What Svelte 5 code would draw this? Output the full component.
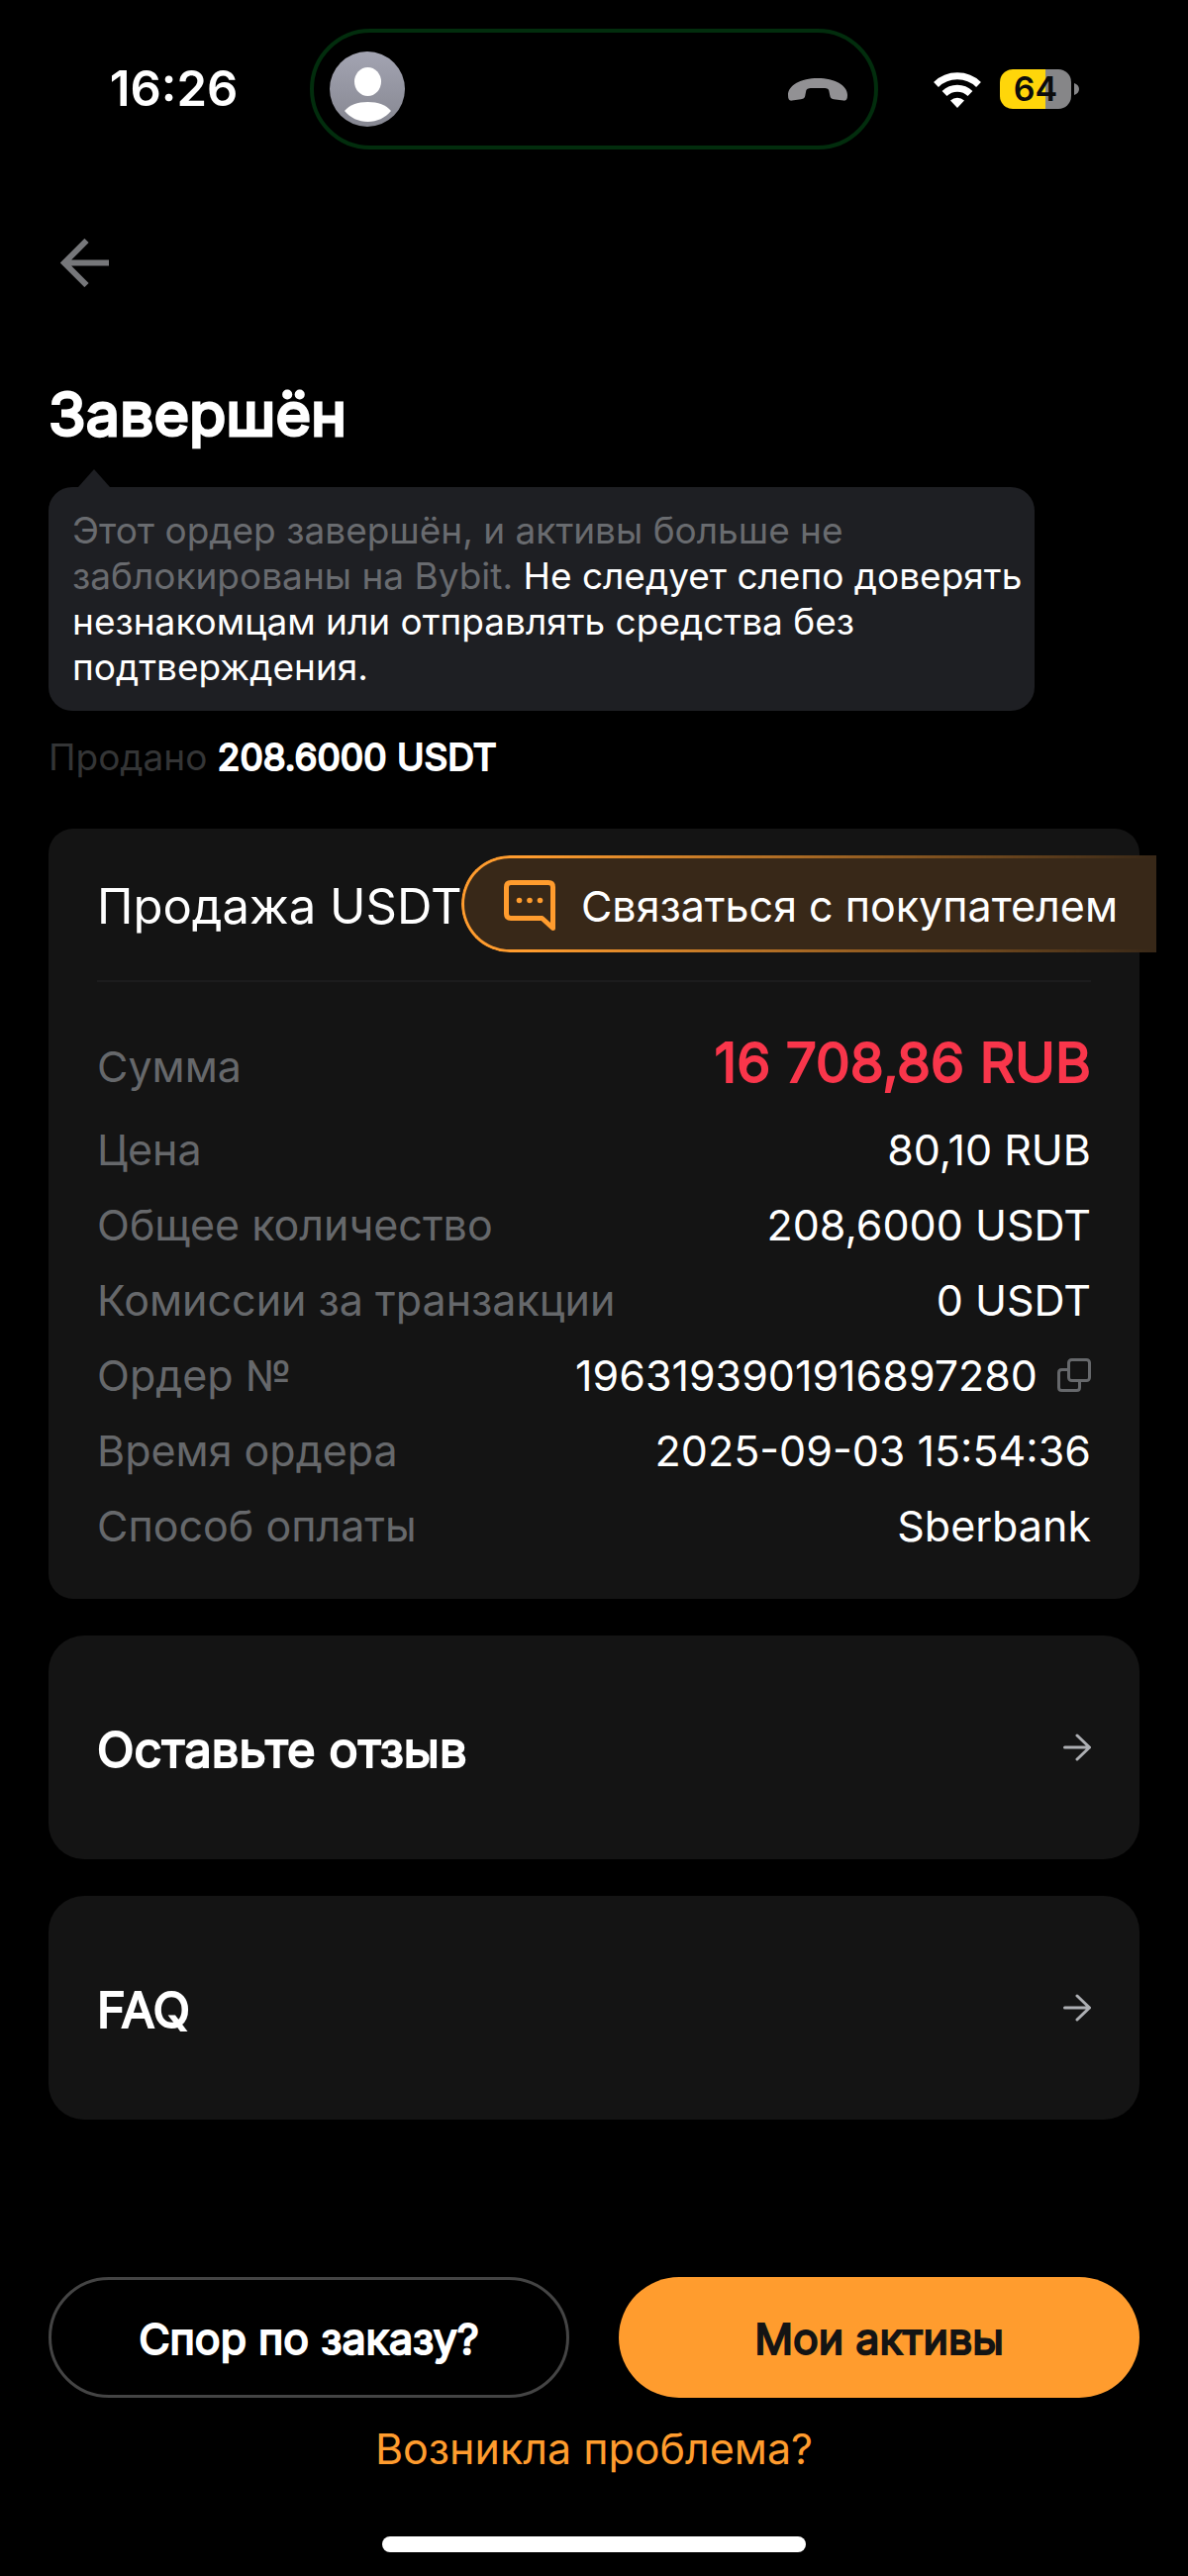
<script lang="ts">
	type Row = { label: string; value: string; copy?: boolean; total?: boolean };

	const rows: Row[] = [
		{ label: 'Сумма', value: '16 708,86 RUB', total: true },
		{ label: 'Цена', value: '80,10 RUB' },
		{ label: 'Общее количество', value: '208,6000 USDT' },
		{ label: 'Комиссии за транзакции', value: '0 USDT' },
		{ label: 'Ордер №', value: '1963193901916897280', copy: true },
		{ label: 'Время ордера', value: '2025-09-03 15:54:36' },
		{ label: 'Способ оплаты', value: 'Sberbank' }
	];

	const links = ['Оставьте отзыв', 'FAQ'];

	function copyValue(value: string) {
		navigator.clipboard?.writeText(value);
	}
</script>

<div class="screen">
	<div class="status">
		<span class="status__time">16:26</span>
		<div class="island">
			<svg class="island__avatar" viewBox="0 0 76 76" aria-hidden="true">
				<defs>
					<linearGradient id="avatar" x1="0" y1="0" x2="0" y2="1">
						<stop offset="0" stop-color="#a3a4b2" />
						<stop offset="1" stop-color="#868791" />
					</linearGradient>
				</defs>
				<circle cx="38" cy="38" r="38" fill="url(#avatar)" />
				<ellipse cx="38.500" cy="30.500" rx="13.500" ry="14.500" fill="#fff" />
				<path d="M15 60C20 54 28 51 38.500 51S57 54 62 60C56 67 48 71 38.500 71S21 67 15 60Z" fill="#fff" />
			</svg>
			<svg class="island__phone" viewBox="0 0 60 23" aria-hidden="true">
				<path
					d="M30 0C13 0 0 7 0 17C0 21 1 23 4 22.600L13 21.300C16 20.800 17 20 17.400 17L18.200 13C18.600 11 20 10 24 10H36C40 10 41 11 41.400 13L42.200 17C42.600 20 43.500 20.800 46 21.300L56 22.600C59 23 60 21 60 17C60 7 47 0 30 0Z"
					fill="#929194"
				/>
			</svg>
		</div>
		<div class="status__icons">
			<svg class="status__wifi" viewBox="0 0 48 37" aria-hidden="true">
				<g fill="none" stroke="#fff" stroke-width="7">
					<path d="M2.500 13.500A31 31 0 0 1 45.500 13.500" />
					<path d="M11 22.500A18.800 18.800 0 0 1 37 22.500" />
				</g>
				<path d="M17 29.500A10.500 10.500 0 0 1 31 29.500L24 37Z" fill="#fff" />
			</svg>
			<div class="battery">
				<span class="battery__level">64</span>
				<svg class="battery__tip" viewBox="0 0 5 12" aria-hidden="true">
					<path d="M0 0C3 1 5 3 5 6S3 11 0 12Z" fill="#868688" />
				</svg>
			</div>
		</div>
	</div>

	<nav class="nav">
		<button class="nav__back" aria-label="Назад">
			<svg viewBox="0 0 49 49" fill="none" stroke="#76777a" stroke-width="6" aria-hidden="true">
				<path d="M26.500 2L4 24.500L26.500 47M4 24.500H49" />
			</svg>
		</button>
	</nav>

	<main class="content">
		<h1 class="title">Завершён</h1>
		<p class="notice">
			Этот ордер завершён, и активы больше не заблокированы на Bybit.
			<strong class="notice__warn">Не следует слепо доверять незнакомцам или отправлять средства без подтверждения.</strong>
		</p>
		<p class="sold">Продано <strong class="sold__amount">208.6000 USDT</strong></p>

		<section class="order">
			<h2 class="order__title">Продажа USDT</h2>
			<button class="contact">
				<svg class="contact__icon" viewBox="0 0 52 52" aria-hidden="true">
					<path
						d="M7 2.500H45Q49.500 2.500 49.500 7V48.500L38.500 38.500H7Q2.500 38.500 2.500 34V7Q2.500 2.500 7 2.500Z"
						fill="none"
						stroke="#ff9c2e"
						stroke-width="5"
						stroke-linejoin="round"
					/>
					<g fill="#ff9c2e">
						<circle cx="15.500" cy="20.500" r="2.800" />
						<circle cx="26" cy="20.500" r="2.800" />
						<circle cx="36.500" cy="20.500" r="2.800" />
					</g>
				</svg>
				<span>Связаться с покупателем</span>
			</button>

			<dl class="details">
				{#each rows as row}
					<div class="details__row" class:details__row--total={row.total}>
						<dt>{row.label}</dt>
						<dd>
							{row.value}
							{#if row.copy}
								<button class="copy" aria-label="Копировать" onclick={() => copyValue(row.value)}>
									<svg viewBox="0 0 34 34" fill="none" stroke="#66686b" stroke-width="3" aria-hidden="true">
										<rect x="11.500" y="1.500" width="21" height="21" rx="3" />
										<path d="M11.500 11.500H4.500Q1.500 11.500 1.500 14.500V29.500Q1.500 32.500 4.500 32.500H19.500Q22.500 32.500 22.500 29.500V22.500" />
									</svg>
								</button>
							{/if}
						</dd>
					</div>
				{/each}
			</dl>
		</section>

		{#each links as link}
			<a class="link-card" href="#top">
				<span class="link-card__text">{link}</span>
				<svg viewBox="0 0 28 28" fill="none" stroke="#adafb3" stroke-width="3" stroke-linecap="round" stroke-linejoin="round" aria-hidden="true">
					<path d="M1.500 14H26.500M14 2L26.500 14L14 26" />
				</svg>
			</a>
		{/each}
	</main>

	<footer class="footer">
		<div class="footer__buttons">
			<button class="btn btn--outline">Спор по заказу?</button>
			<button class="btn btn--primary">Мои активы</button>
		</div>
		<a class="footer__help" href="#help">Возникла проблема?</a>
		<div class="home-bar"></div>
	</footer>
</div>

<style>
	:global(body) {
		margin: 0;
		background-color: #000;
	}

	.screen {
		display: flex;
		flex-direction: column;
		box-sizing: border-box;
		min-height: 100vh;
		padding-top: 29px;
		background-color: #000;
		color: #fff;
		font-family: Inter, 'Liberation Sans', sans-serif;
	}

	button {
		margin: 0;
		padding: 0;
		border: none;
		background: none;
		color: inherit;
		font: inherit;
		cursor: pointer;
	}

	a {
		color: inherit;
		text-decoration: none;
	}

	svg {
		display: block;
		flex-shrink: 0;
	}

	.status {
		display: grid;
		grid-template-columns: 1fr minmax(0, 574px) 1fr;
		align-items: center;
	}

	.status__time {
		padding-left: 38px;
		font-size: 49px;
		font-weight: 600;
		line-height: 60px;
		text-align: center;
	}

	.island {
		display: flex;
		justify-content: space-between;
		align-items: center;
		box-sizing: border-box;
		height: 122px;
		padding: 0 27px 0 16px;
		border: 4px solid #022d0d;
		border-radius: 61px;
	}

	.island__avatar {
		width: 76px;
		height: 76px;
	}

	.island__phone {
		width: 60px;
		height: 23px;
	}

	.status__icons {
		display: flex;
		align-items: center;
		gap: 19px;
		padding-left: 56px;
	}

	.status__wifi {
		width: 48px;
		height: 37px;
	}

	.battery {
		display: flex;
		align-items: center;
		gap: 3px;
	}

	.battery__level {
		width: 72px;
		height: 40px;
		border-radius: 13px;
		background: linear-gradient(to right, #ffd60a 64%, #868688 64%);
		color: #0c0c0c;
		font-size: 34px;
		font-weight: 600;
		line-height: 40px;
		text-align: center;
	}

	.battery__tip {
		width: 5px;
		height: 12px;
	}

	.nav {
		padding: 90px 61px;
	}

	.nav__back {
		display: block;
	}

	.nav__back svg {
		width: 49px;
		height: 49px;
	}

	.content {
		padding: 0 49px;
	}

	.title {
		margin: 0;
		font-size: 61px;
		font-weight: 400;
		line-height: 76px;
		-webkit-text-stroke: 3px;
	}

	.notice {
		position: relative;
		box-sizing: border-box;
		max-width: 996px;
		margin: 36px 0 24px;
		padding: 21px 12px 21px 24px;
		border-radius: 24px;
		background-color: #1e1f23;
		color: #696b6f;
		font-size: 37px;
		line-height: 46px;
	}

	.notice::before {
		content: '';
		position: absolute;
		top: -18px;
		left: 30px;
		border: 16px solid transparent;
		border-top: none;
		border-bottom: 18px solid #1e1f23;
	}

	.notice__warn {
		color: #fff;
		font-weight: 400;
	}

	.sold {
		margin: 0 0 49px;
		color: #343536;
		font-size: 37px;
		line-height: 46px;
	}

	.sold__amount {
		color: #fff;
		font-weight: 400;
		-webkit-text-stroke: 2px;
	}

	.order {
		position: relative;
		padding: 0 49px;
		border-radius: 25px;
		background-color: #141414;
	}

	.order__title {
		margin: 0;
		padding: 49px 0 44px;
		border-bottom: 2px solid #1c1c1d;
		font-size: 49px;
		font-weight: 400;
		line-height: 60px;
	}

	.contact {
		position: absolute;
		top: 27px;
		right: -17px;
		display: flex;
		align-items: center;
		gap: 26px;
		box-sizing: border-box;
		height: 98px;
		padding: 3px 39px 0 43px;
		border-radius: 49px 0 0 49px;
		background-color: #382818;
		font-size: 43px;
		line-height: 50px;
		white-space: nowrap;
	}

	/* outline that fades out towards the screen edge */
	.contact::before {
		content: '';
		position: absolute;
		inset: 0;
		border: 3px solid #ff9c2e;
		border-right: none;
		border-radius: inherit;
		mask-image: linear-gradient(to right, #000 10%, transparent);
	}

	.contact__icon {
		width: 52px;
		height: 52px;
	}

	.details {
		display: grid;
		gap: 26px;
		margin: 0;
		padding: 49px 0;
		font-size: 43px;
		line-height: 50px;
	}

	.details__row {
		display: flex;
		justify-content: space-between;
		align-items: baseline;
	}

	.details dt {
		color: #66686b;
	}

	.details dd {
		display: flex;
		align-items: center;
		gap: 20px;
		margin: 0;
	}

	.details__row--total {
		padding-bottom: 5px;
	}

	.details__row--total dd {
		color: #f9364b;
		font-size: 55px;
		line-height: 64px;
		-webkit-text-stroke: 2px;
	}

	.copy svg {
		width: 34px;
		height: 34px;
	}

	.link-card {
		display: flex;
		justify-content: space-between;
		align-items: center;
		margin-top: 37px;
		padding: 80px 49px;
		border-radius: 36px;
		background-color: #141414;
		font-size: 49px;
		line-height: 60px;
	}

	.link-card__text {
		padding-top: 6px;
		-webkit-text-stroke: 2px;
	}

	.link-card svg {
		width: 28px;
		height: 28px;
	}

	.footer {
		display: flex;
		flex-direction: column;
		align-items: center;
		margin-top: auto;
		padding: 0 49px 24px;
	}

	.footer__buttons {
		display: grid;
		grid-template-columns: 1fr 1fr;
		gap: 50px;
		width: 100%;
	}

	.btn {
		box-sizing: border-box;
		height: 122px;
		padding-top: 2px;
		border-radius: 61px;
		font-size: 43px;
		-webkit-text-stroke: 2px;
	}

	.btn--outline {
		border: 3px solid #444;
	}

	.btn--primary {
		background-color: #ff9c2e;
		color: #141414;
	}

	.footer__help {
		margin: 25px 0 62px;
		color: #ff9c2e;
		font-size: 43px;
		line-height: 53px;
	}

	.home-bar {
		width: 428px;
		height: 16px;
		border-radius: 8px;
		background-color: #fff;
	}
</style>
